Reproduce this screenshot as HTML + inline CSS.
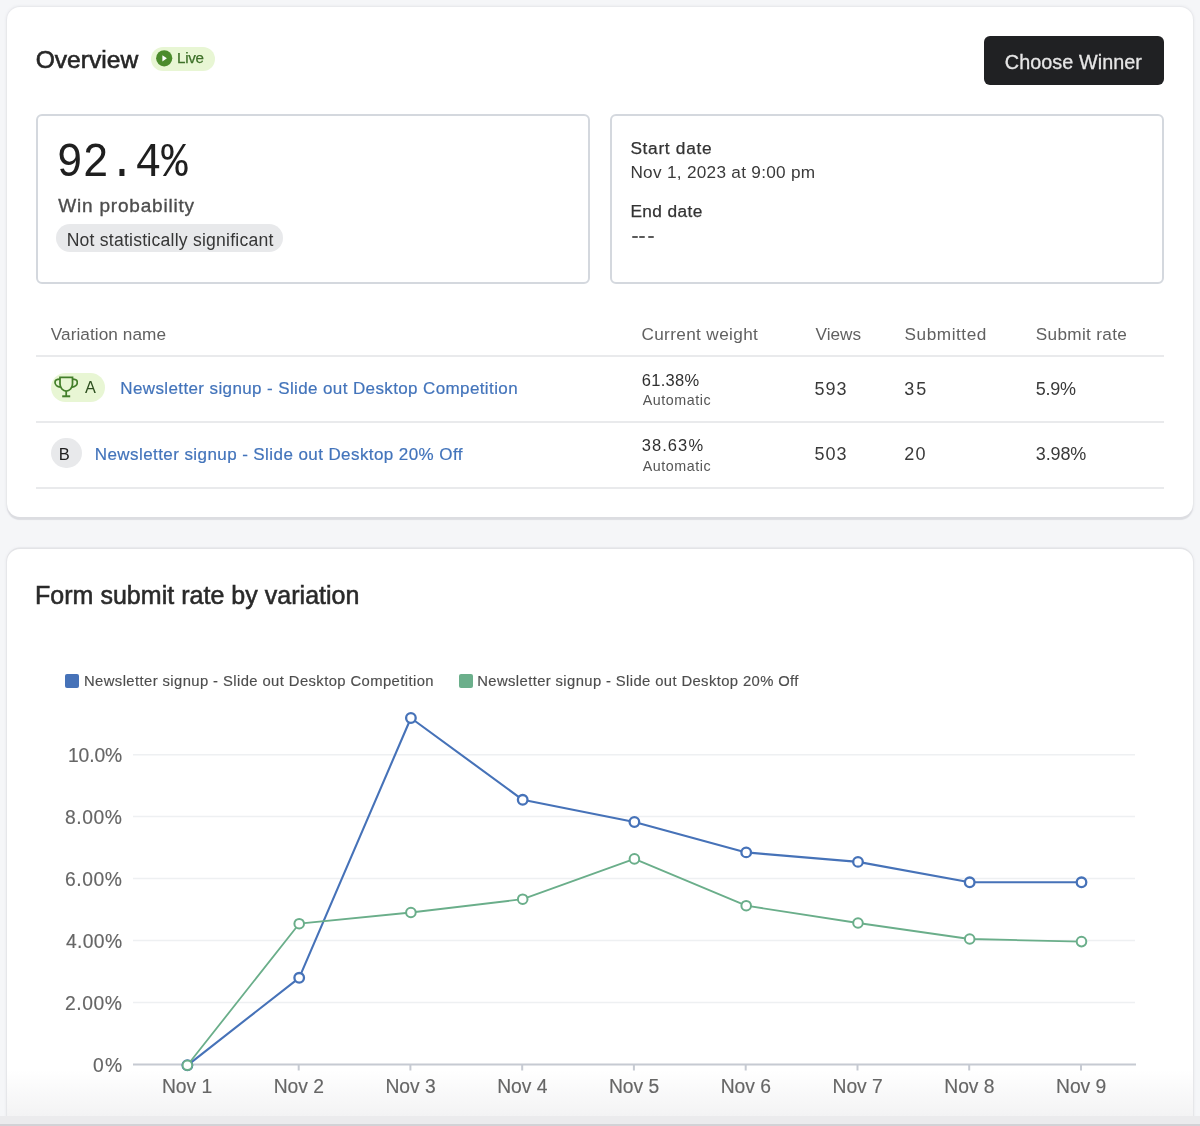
<!DOCTYPE html>
<html><head><meta charset="utf-8"><style>
html,body{margin:0;padding:0;}
body{filter:blur(0.35px);width:1200px;height:1126px;overflow:hidden;position:relative;background:#f5f6f8;font-family:'Liberation Sans', sans-serif;}
.t{position:absolute;white-space:nowrap;}
</style></head><body>
<div style="position:absolute;left:7px;top:7px;width:1186px;height:510px;background:#fff;border-radius:13px;box-shadow:0 2.5px 1px 0 #dcdde1, 0 0 0 1px #e9eaed, 0 0 2px 2px #eeeff2;"></div>
<div class="t" style="left:35.70px;top:48.30px;font-size:24.6px;line-height:24.6px;color:#262626;-webkit-text-stroke:0.6px #262626;">Overview</div>
<div style="position:absolute;left:151px;top:46.7px;width:64px;height:24px;background:#e8f6d4;border-radius:12px;"></div>
<svg style="position:absolute;left:155px;top:50px" width="18" height="17" viewBox="0 0 18 17"><circle cx="9.2" cy="8.3" r="8.1" fill="#4b8b2c"/><path d="M7.4 5.2 L11.9 8.3 L7.4 11.4 Z" fill="#fff"/></svg>
<div class="t" style="left:177.00px;top:50.30px;font-size:15.2px;line-height:15.2px;color:#3d7028;letter-spacing:-0.270px;-webkit-text-stroke:0.25px #3d7028;">Live</div>
<div style="position:absolute;left:984px;top:36px;width:180px;height:49px;background:#202123;border-radius:6px;"></div>
<div class="t" style="left:1004.80px;top:52.50px;font-size:19.8px;line-height:19.8px;color:#e6e6e6;letter-spacing:0.068px;-webkit-text-stroke:0.3px #e6e6e6;">Choose Winner</div>
<div style="position:absolute;left:36px;top:114px;width:554px;height:170px;box-sizing:border-box;border:2px solid #d4d8de;border-radius:6px;"></div>
<div style="position:absolute;left:610px;top:114px;width:554px;height:170px;box-sizing:border-box;border:2px solid #d4d8de;border-radius:6px;"></div>
<div class="t" style="left:56.40px;top:142.25px;font-size:44px;line-height:44px;color:#1f1f1f;font-family:'Liberation Mono', monospace;letter-spacing:-0.203px;transform:scaleY(1.1);transform-origin:0 76.5%;">92.4%</div>
<div class="t" style="left:58.30px;top:195.90px;font-size:19.0px;line-height:19.0px;color:#4d4d4d;letter-spacing:0.794px;-webkit-text-stroke:0.35px #4d4d4d;">Win probability</div>
<div style="position:absolute;left:56px;top:224.4px;width:227px;height:28px;background:#e8e9eb;border-radius:14px;"></div>
<div class="t" style="left:66.70px;top:231.80px;font-size:17.6px;line-height:17.6px;color:#363636;letter-spacing:0.222px;">Not statistically significant</div>
<div class="t" style="left:630.40px;top:140.10px;font-size:17.3px;line-height:17.3px;color:#333;letter-spacing:0.690px;-webkit-text-stroke:0.25px #333;">Start date</div>
<div class="t" style="left:630.40px;top:163.90px;font-size:17.2px;line-height:17.2px;color:#3a3a3a;letter-spacing:0.291px;">Nov 1, 2023 at 9:00 pm</div>
<div class="t" style="left:630.40px;top:202.60px;font-size:17.3px;line-height:17.3px;color:#333;letter-spacing:0.386px;-webkit-text-stroke:0.25px #333;">End date</div>
<div style="position:absolute;left:631.8px;top:236.2px;width:5.8px;height:2px;background:#5a5a5a;border-radius:1px;"></div>
<div style="position:absolute;left:639.3px;top:236.2px;width:6px;height:2px;background:#5a5a5a;border-radius:1px;"></div>
<div style="position:absolute;left:647.9px;top:236.2px;width:5.9px;height:2px;background:#5a5a5a;border-radius:1px;"></div>
<div class="t" style="left:50.80px;top:326.00px;font-size:17.2px;line-height:17.2px;color:#616161;letter-spacing:0.069px;">Variation name</div>
<div class="t" style="left:641.40px;top:326.00px;font-size:17.2px;line-height:17.2px;color:#616161;letter-spacing:0.360px;">Current weight</div>
<div class="t" style="left:815.60px;top:326.00px;font-size:17.2px;line-height:17.2px;color:#616161;">Views</div>
<div class="t" style="left:904.50px;top:326.00px;font-size:17.2px;line-height:17.2px;color:#616161;letter-spacing:0.562px;">Submitted</div>
<div class="t" style="left:1035.75px;top:326.00px;font-size:17.2px;line-height:17.2px;color:#616161;letter-spacing:0.315px;">Submit rate</div>
<div style="position:absolute;left:36px;top:355px;width:1128px;height:1.5px;background:#e9eaec;"></div>
<div style="position:absolute;left:36px;top:421px;width:1128px;height:1.5px;background:#e9eaec;"></div>
<div style="position:absolute;left:36px;top:487px;width:1128px;height:1.5px;background:#e9eaec;"></div>
<div style="position:absolute;left:50.5px;top:373px;width:54.5px;height:29px;background:#e8f6d4;border-radius:15px;"></div>
<svg style="position:absolute;left:54px;top:376px" width="24" height="22" viewBox="0 0 24 22" fill="none" stroke="#437f2a" stroke-width="1.75"><path d="M6 1.3 H18.5 V8 C18.5 12 15.5 15 12.2 15 C9 15 6 12 6 8 Z"/><path d="M6 3 C3 3 1 4.3 1 6.3 C1 9 3.3 11 6.4 11"/><path d="M18.5 3 C21.5 3 23.3 4.3 23.3 6.3 C23.3 9 21 11 18 11"/><path d="M12.2 15 V20"/><path d="M8.2 20.3 H16.2" stroke-width="2"/></svg>
<div class="t" style="left:85.00px;top:378.75px;font-size:16.3px;line-height:16.3px;color:#2d4f1f;">A</div>
<div class="t" style="left:120.25px;top:380.40px;font-size:17px;line-height:17px;color:#4374bb;letter-spacing:0.384px;-webkit-text-stroke:0.2px #4374bb;">Newsletter signup - Slide out Desktop Competition</div>
<div class="t" style="left:641.70px;top:371.60px;font-size:16.5px;line-height:16.5px;color:#303030;letter-spacing:0.324px;">61.38%</div>
<div class="t" style="left:642.70px;top:393.30px;font-size:14.3px;line-height:14.3px;color:#555;letter-spacing:0.540px;">Automatic</div>
<div class="t" style="left:814.40px;top:379.80px;font-size:18px;line-height:18px;color:#3a3a3a;letter-spacing:0.990px;">593</div>
<div class="t" style="left:904.30px;top:379.80px;font-size:18px;line-height:18px;color:#3a3a3a;letter-spacing:1.980px;">35</div>
<div class="t" style="left:1035.75px;top:379.80px;font-size:18px;line-height:18px;color:#3a3a3a;letter-spacing:-0.285px;">5.9%</div>
<div style="position:absolute;left:50.5px;top:438.3px;width:31px;height:30px;background:#e8e9eb;border-radius:15px;"></div>
<div class="t" style="left:58.80px;top:446.20px;font-size:16.5px;line-height:16.5px;color:#202020;">B</div>
<div class="t" style="left:94.80px;top:446.30px;font-size:17px;line-height:17px;color:#4374bb;letter-spacing:0.417px;-webkit-text-stroke:0.2px #4374bb;">Newsletter signup - Slide out Desktop 20% Off</div>
<div class="t" style="left:641.70px;top:436.50px;font-size:16.5px;line-height:16.5px;color:#303030;letter-spacing:1.080px;">38.63%</div>
<div class="t" style="left:642.70px;top:458.90px;font-size:14.3px;line-height:14.3px;color:#555;letter-spacing:0.540px;">Automatic</div>
<div class="t" style="left:814.40px;top:445.30px;font-size:18px;line-height:18px;color:#3a3a3a;letter-spacing:0.990px;">503</div>
<div class="t" style="left:904.30px;top:445.30px;font-size:18px;line-height:18px;color:#3a3a3a;letter-spacing:1.260px;">20</div>
<div class="t" style="left:1035.75px;top:445.30px;font-size:18px;line-height:18px;color:#3a3a3a;letter-spacing:-0.113px;">3.98%</div>
<div style="position:absolute;left:7px;top:549px;width:1186px;height:600px;background:#fff;border-radius:13px;box-shadow:0 -1px 0 0.5px #e3e4e7, 0 0 0 1px #e9eaed, 0 0 2px 2px #eeeff2;"></div>
<div style="position:absolute;left:7px;top:1070px;width:1186px;height:46px;background:linear-gradient(rgba(244,244,245,0), #f3f3f4);"></div>
<div class="t" style="left:35.00px;top:583.30px;font-size:25px;line-height:25px;color:#2a2a2a;letter-spacing:0.026px;-webkit-text-stroke:0.55px #2a2a2a;">Form submit rate by variation</div>
<div style="position:absolute;left:65.3px;top:673.8px;width:14px;height:14px;background:#4672b8;border-radius:2px;"></div>
<div class="t" style="left:84.00px;top:674.00px;font-size:14.8px;line-height:14.8px;color:#4d4d4d;letter-spacing:0.411px;-webkit-text-stroke:0.15px #4d4d4d;">Newsletter signup - Slide out Desktop Competition</div>
<div style="position:absolute;left:458.7px;top:673.8px;width:14.6px;height:14px;background:#6baf8b;border-radius:2px;"></div>
<div class="t" style="left:477.30px;top:674.00px;font-size:14.8px;line-height:14.8px;color:#4d4d4d;letter-spacing:0.389px;-webkit-text-stroke:0.15px #4d4d4d;">Newsletter signup - Slide out Desktop 20% Off</div>
<svg style="position:absolute;left:0;top:0" width="1200" height="1126">
<line x1="133" y1="754.7" x2="1135" y2="754.7" stroke="#eef0f2" stroke-width="1.5"/>
<line x1="133" y1="816.6" x2="1135" y2="816.6" stroke="#eef0f2" stroke-width="1.5"/>
<line x1="133" y1="878.6" x2="1135" y2="878.6" stroke="#eef0f2" stroke-width="1.5"/>
<line x1="133" y1="940.5" x2="1135" y2="940.5" stroke="#eef0f2" stroke-width="1.5"/>
<line x1="133" y1="1002.5" x2="1135" y2="1002.5" stroke="#eef0f2" stroke-width="1.5"/>
<line x1="133" y1="1064.4" x2="1136" y2="1064.4" stroke="#c6cad2" stroke-width="2"/>
<line x1="186.9" y1="1064.5" x2="186.9" y2="1070.5" stroke="#c6cad2" stroke-width="2"/>
<line x1="298.7" y1="1064.5" x2="298.7" y2="1070.5" stroke="#c6cad2" stroke-width="2"/>
<line x1="410.4" y1="1064.5" x2="410.4" y2="1070.5" stroke="#c6cad2" stroke-width="2"/>
<line x1="522.2" y1="1064.5" x2="522.2" y2="1070.5" stroke="#c6cad2" stroke-width="2"/>
<line x1="633.9" y1="1064.5" x2="633.9" y2="1070.5" stroke="#c6cad2" stroke-width="2"/>
<line x1="745.7" y1="1064.5" x2="745.7" y2="1070.5" stroke="#c6cad2" stroke-width="2"/>
<line x1="857.5" y1="1064.5" x2="857.5" y2="1070.5" stroke="#c6cad2" stroke-width="2"/>
<line x1="969.2" y1="1064.5" x2="969.2" y2="1070.5" stroke="#c6cad2" stroke-width="2"/>
<line x1="1081.0" y1="1064.5" x2="1081.0" y2="1070.5" stroke="#c6cad2" stroke-width="2"/>
<polyline points="187.4,1065.3 299.2,977.8 410.9,718.0 522.7,799.8 634.4,822.0 746.2,852.4 858.0,861.9 969.7,882.3 1081.5,882.3" fill="none" stroke="#4672b8" stroke-width="2.1" stroke-linejoin="round"/>
<circle cx="187.4" cy="1065.3" r="4.8" fill="#fff" stroke="#4672b8" stroke-width="2.3000000000000003"/>
<circle cx="299.2" cy="977.8" r="4.8" fill="#fff" stroke="#4672b8" stroke-width="2.3000000000000003"/>
<circle cx="410.9" cy="718.0" r="4.8" fill="#fff" stroke="#4672b8" stroke-width="2.3000000000000003"/>
<circle cx="522.7" cy="799.8" r="4.8" fill="#fff" stroke="#4672b8" stroke-width="2.3000000000000003"/>
<circle cx="634.4" cy="822.0" r="4.8" fill="#fff" stroke="#4672b8" stroke-width="2.3000000000000003"/>
<circle cx="746.2" cy="852.4" r="4.8" fill="#fff" stroke="#4672b8" stroke-width="2.3000000000000003"/>
<circle cx="858.0" cy="861.9" r="4.8" fill="#fff" stroke="#4672b8" stroke-width="2.3000000000000003"/>
<circle cx="969.7" cy="882.3" r="4.8" fill="#fff" stroke="#4672b8" stroke-width="2.3000000000000003"/>
<circle cx="1081.5" cy="882.3" r="4.8" fill="#fff" stroke="#4672b8" stroke-width="2.3000000000000003"/>
<polyline points="187.4,1065.3 299.2,923.7 410.9,912.5 522.7,899.2 634.4,858.9 746.2,905.7 858.0,923.0 969.7,939.0 1081.5,941.6" fill="none" stroke="#6aae8a" stroke-width="1.8" stroke-linejoin="round"/>
<circle cx="187.4" cy="1065.3" r="4.8" fill="#fff" stroke="#6aae8a" stroke-width="2.0"/>
<circle cx="299.2" cy="923.7" r="4.8" fill="#fff" stroke="#6aae8a" stroke-width="2.0"/>
<circle cx="410.9" cy="912.5" r="4.8" fill="#fff" stroke="#6aae8a" stroke-width="2.0"/>
<circle cx="522.7" cy="899.2" r="4.8" fill="#fff" stroke="#6aae8a" stroke-width="2.0"/>
<circle cx="634.4" cy="858.9" r="4.8" fill="#fff" stroke="#6aae8a" stroke-width="2.0"/>
<circle cx="746.2" cy="905.7" r="4.8" fill="#fff" stroke="#6aae8a" stroke-width="2.0"/>
<circle cx="858.0" cy="923.0" r="4.8" fill="#fff" stroke="#6aae8a" stroke-width="2.0"/>
<circle cx="969.7" cy="939.0" r="4.8" fill="#fff" stroke="#6aae8a" stroke-width="2.0"/>
<circle cx="1081.5" cy="941.6" r="4.8" fill="#fff" stroke="#6aae8a" stroke-width="2.0"/>
</svg>
<div class="t" style="left:68.00px;top:746.20px;font-size:19.3px;line-height:19.3px;color:#666;letter-spacing:-0.113px;-webkit-text-stroke:0.15px #666;">10.0%</div>
<div class="t" style="left:65.00px;top:808.10px;font-size:19.3px;line-height:19.3px;color:#666;letter-spacing:0.562px;-webkit-text-stroke:0.15px #666;">8.00%</div>
<div class="t" style="left:65.00px;top:870.10px;font-size:19.3px;line-height:19.3px;color:#666;letter-spacing:0.562px;-webkit-text-stroke:0.15px #666;">6.00%</div>
<div class="t" style="left:66.00px;top:932.00px;font-size:19.3px;line-height:19.3px;color:#666;letter-spacing:0.338px;-webkit-text-stroke:0.15px #666;">4.00%</div>
<div class="t" style="left:65.00px;top:994.00px;font-size:19.3px;line-height:19.3px;color:#666;letter-spacing:0.562px;-webkit-text-stroke:0.15px #666;">2.00%</div>
<div class="t" style="left:93.00px;top:1055.90px;font-size:19.3px;line-height:19.3px;color:#666;letter-spacing:1.350px;-webkit-text-stroke:0.15px #666;">0%</div>
<div class="t" style="left:161.90px;top:1076.60px;font-size:19.3px;line-height:19.3px;color:#666;-webkit-text-stroke:0.15px #666;">Nov 1</div>
<div class="t" style="left:273.66px;top:1076.60px;font-size:19.3px;line-height:19.3px;color:#666;-webkit-text-stroke:0.15px #666;">Nov 2</div>
<div class="t" style="left:385.42px;top:1076.60px;font-size:19.3px;line-height:19.3px;color:#666;-webkit-text-stroke:0.15px #666;">Nov 3</div>
<div class="t" style="left:497.18px;top:1076.60px;font-size:19.3px;line-height:19.3px;color:#666;-webkit-text-stroke:0.15px #666;">Nov 4</div>
<div class="t" style="left:608.94px;top:1076.60px;font-size:19.3px;line-height:19.3px;color:#666;-webkit-text-stroke:0.15px #666;">Nov 5</div>
<div class="t" style="left:720.70px;top:1076.60px;font-size:19.3px;line-height:19.3px;color:#666;-webkit-text-stroke:0.15px #666;">Nov 6</div>
<div class="t" style="left:832.46px;top:1076.60px;font-size:19.3px;line-height:19.3px;color:#666;-webkit-text-stroke:0.15px #666;">Nov 7</div>
<div class="t" style="left:944.22px;top:1076.60px;font-size:19.3px;line-height:19.3px;color:#666;-webkit-text-stroke:0.15px #666;">Nov 8</div>
<div class="t" style="left:1055.98px;top:1076.60px;font-size:19.3px;line-height:19.3px;color:#666;-webkit-text-stroke:0.15px #666;">Nov 9</div>
<div style="position:absolute;left:0px;top:1116px;width:1200px;height:8px;background:#ebebed;"></div>
<div style="position:absolute;left:0px;top:1124px;width:1200px;height:2px;background:#d2d2d6;"></div>
</body></html>
